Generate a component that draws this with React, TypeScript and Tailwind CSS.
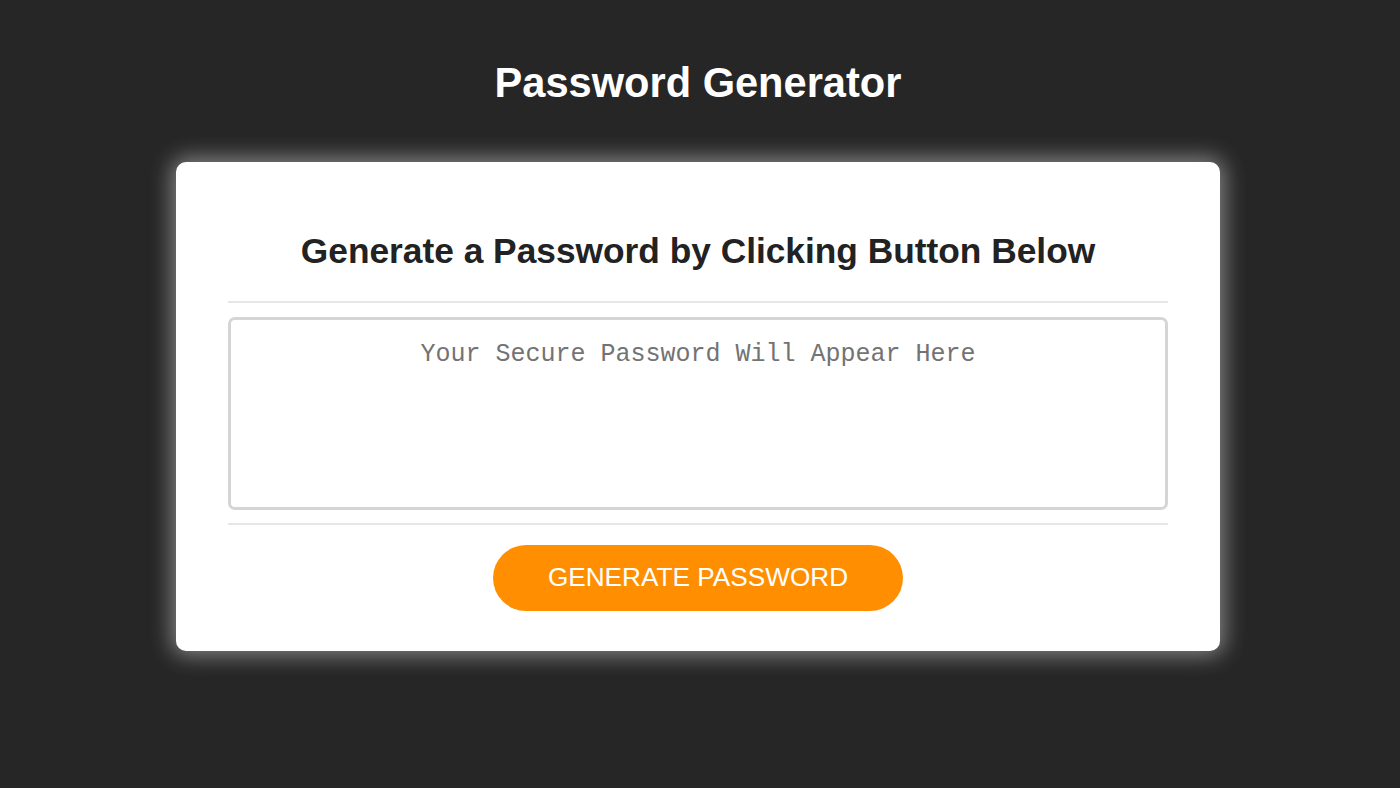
import React from "react";

export default function App() {
  return (
    <div className="min-h-screen w-full bg-[#262626] pt-[62px] pr-[4px] font-['Liberation_Sans',Arial,sans-serif]">
      <h1 className="text-center text-[41.6px] leading-[42px] font-bold text-white">
        Password Generator
      </h1>
      <div className="mx-auto mt-[58px] w-[1044px] rounded-[10px] bg-white px-[52px] pt-[71px] pb-[40px] shadow-[0_0_22px_4px_rgba(255,255,255,0.45)]">
        <h2 className="text-center text-[35.3px] leading-[35px] font-bold text-[#222222]">
          Generate a Password by Clicking Button Below
        </h2>
        <div className="mt-[33px] h-[2px] bg-[#e6e6e8]"></div>
        <textarea
          readOnly
          placeholder="Your Secure Password Will Appear Here"
          className="mt-[14px] block h-[193px] w-full resize-none rounded-[7px] border-[3px] border-[#d5d5d5] px-4 pt-[21px] text-center font-['Liberation_Mono','Courier_New',monospace] text-[25px] leading-[28px] text-[#444] outline-none placeholder:text-[#737373]"
        />
        <div className="mt-[13px] h-[2px] bg-[#e6e6e8]"></div>
        <div className="mt-[20px] flex justify-center">
          <button className="flex h-[66px] w-[410px] items-center justify-center rounded-full bg-[#ff8f00] text-[26.2px] text-white">
            GENERATE PASSWORD
          </button>
        </div>
      </div>
    </div>
  );
}
